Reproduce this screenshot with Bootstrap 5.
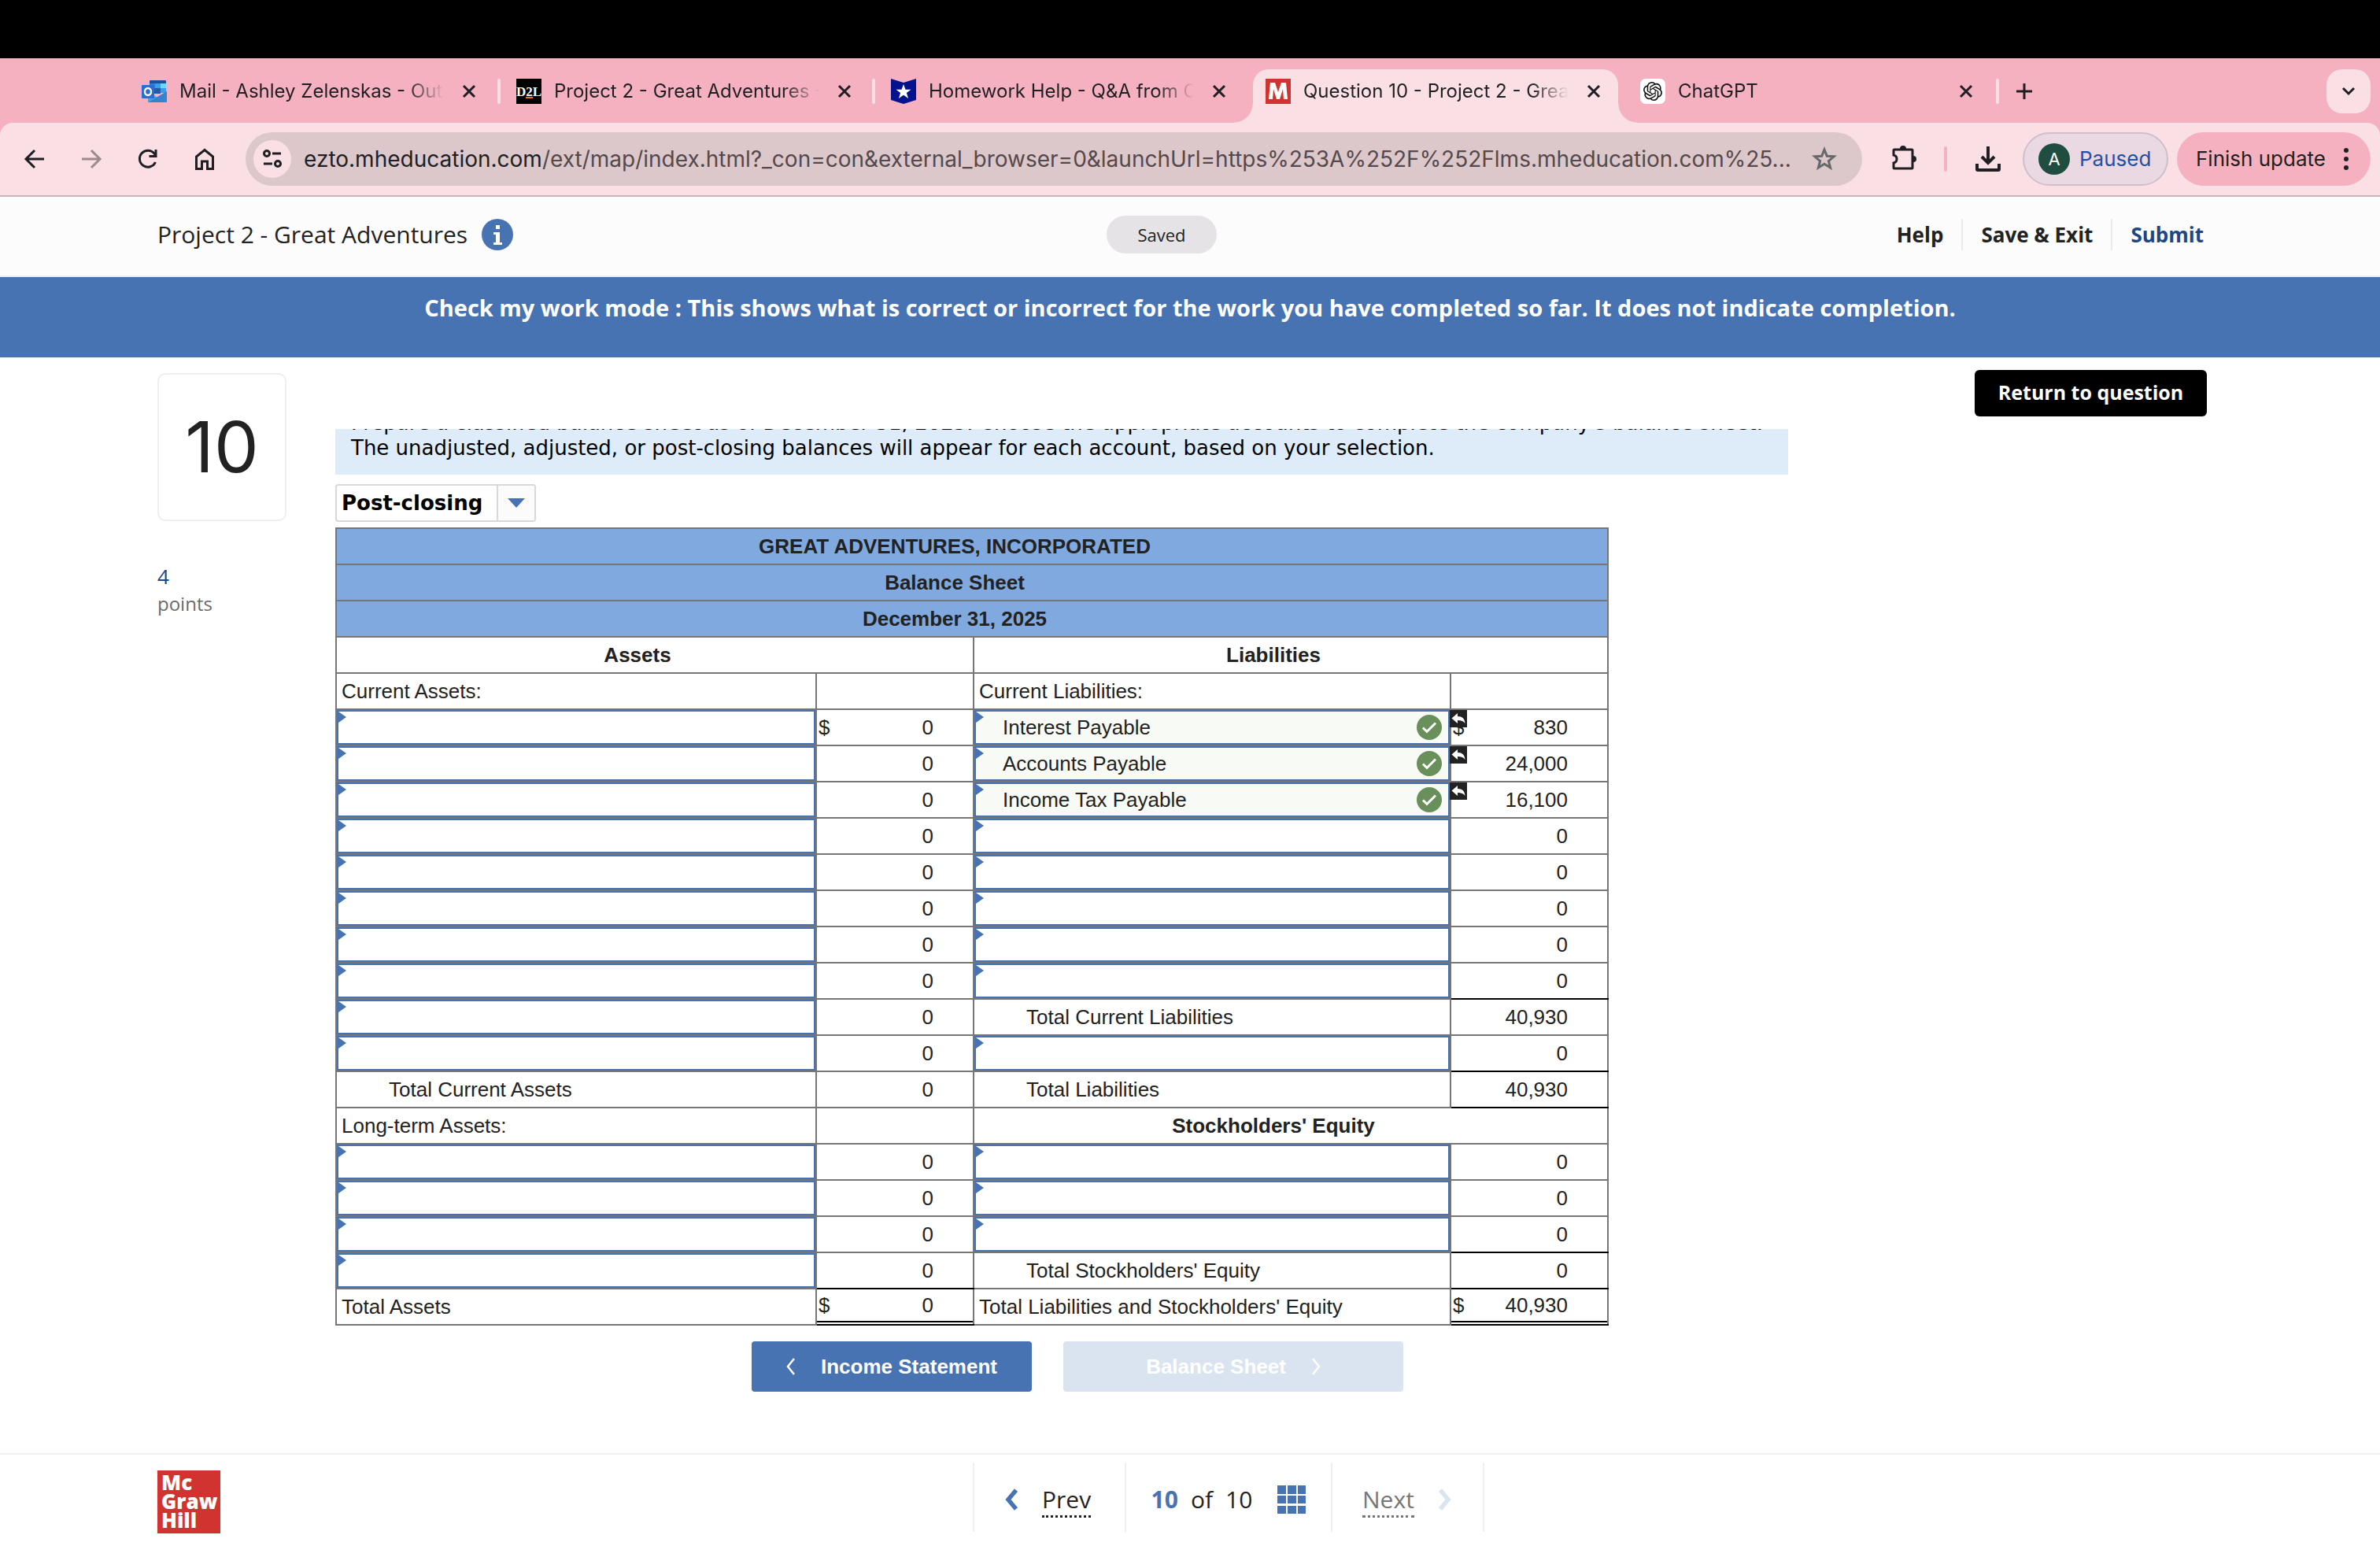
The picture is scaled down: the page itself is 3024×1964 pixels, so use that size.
<!DOCTYPE html>
<html lang="en">
<head>
<meta charset="utf-8">
<meta name="viewport" content="width=device-width, initial-scale=1">
<title>Question 10 - Project 2 - Great Adventures</title>
<link href="https://cdn.jsdelivr.net/npm/bootstrap@5.3.0/dist/css/bootstrap.min.css" rel="stylesheet">
<style>
:root{--blue:#4873b3;--ink:#222;--line:#767676;--strip:#f5b1bf;--bar:#fae0e4}
body{font-family:"Open Sans",sans-serif;font-size:26px;line-height:32px;color:var(--ink);background:#fff}
button,select{font:inherit;color:inherit}
button{background:none;border:0;padding:0}
svg{display:block;flex:none}
a{color:inherit;text-decoration:none}
.browser{font-family:Inter,sans-serif;color:#1f1f23}
.notch{height:74px;background:#000}
.strip{height:82px;padding:14px 12px 0 164px;background:var(--strip)}
.btab{width:464px;height:68px;padding:0 16px 12px 16px;gap:16px;font-size:24px;position:relative}
.btab-title{overflow:hidden;white-space:nowrap;-webkit-mask-image:linear-gradient(90deg,#000 86%,transparent);mask-image:linear-gradient(90deg,#000 86%,transparent)}
.btab-x{width:36px;height:36px}
.btab.on{background:var(--bar);border-radius:20px 20px 0 0}
.btab.on::before,.btab.on::after{content:"";position:absolute;bottom:0;width:24px;height:24px}
.btab.on::before{right:100%;background:radial-gradient(circle at 0 0,transparent 23px,var(--bar) 24px)}
.btab.on::after{left:100%;background:radial-gradient(circle at 100% 0,transparent 23px,var(--bar) 24px)}
.gap-sep{width:12px;height:32px;margin-top:12px}
.gap-sep i{width:4px;height:32px;border-radius:2px;background:var(--bar)}
.plus{width:48px;height:56px;margin-left:4px}
.tabsearch{width:56px;height:56px;border-radius:20px;background:var(--bar)}
.toolwrap{background:var(--strip)}
.tools{height:94px;padding:0 12px 0 28px;background:var(--bar);border-bottom:2px solid #c9b4ba;border-radius:16px 16px 0 0}
.navicons{gap:40px;margin-right:36px}
.address{height:68px;border-radius:34px;background:#dcc7ca;padding:0 32px 0 10px;font-size:28px;color:#56494c}
.address b{font-weight:400;color:#1f1f23}
.tune{width:48px;height:48px;border-radius:50%;background:var(--bar)}
.puzzle{margin-left:36px}
.tsep{width:4px;height:32px;border-radius:2px;background:var(--strip);margin:0 36px 0 34px}
.paused{height:68px;width:185px;border-radius:34px;border:2px solid #cfbfcb;background:#ead8e2;color:#2450a4;margin:0 11px 0 28px;padding-left:18px;gap:12px}
.avatar{width:40px;height:40px;border-radius:50%;background:#1f4d40;color:#fff;font-size:22px}
.finish{height:68px;width:246px;border-radius:34px;background:var(--strip);padding:0 28px 0 24px}
.apphead{display:grid;grid-template-columns:1fr auto 1fr;height:102px;padding:0 224px 4px 200px;background:#fcfcfc;border-bottom:2px solid #eee}
.apptitle{font-size:30px;gap:18px}
.saved{height:48px;width:140px;border-radius:24px;background:#e5e3e6;font-size:22px}
.headlinks{font-weight:700}
.headlinks a+a{border-left:2px solid #e9e9e9;margin-left:23px;padding-left:23px}
.headlinks a{line-height:40px}
.banner{height:102px;padding-top:19px;background:var(--blue);color:#fff;font-size:29px;line-height:40px;font-weight:700}
main{padding:0 220px 0 200px}
.qside{width:164px;margin-right:62px;padding-top:20px}
.qnum{height:188px;border:2px solid #eee;border-radius:10px;font:400 90px/1 Inter,sans-serif}
.pts{color:#1f4684;font-size:26px;margin-top:54px}
.ptl{color:#6b6b6b;font-size:24px;line-height:38px}
.work{width:1886px;padding-top:91px}
.info{margin-right:40px;padding:0 20px 18px;background:#deebf8;overflow:hidden;color:#000;font:26px/32px "DejaVu Sans",sans-serif}
.info p{margin:-24px 0 0;white-space:nowrap}
.balance{position:relative;width:255px;margin:12px 0 7px}
.balance select{appearance:none;width:100%;height:48px;border:2px solid #d8d8d8;border-radius:4px;background:#fff;padding:0 6px;font:700 26px/32px "DejaVu Sans",sans-serif;color:#000;display:block}
.balance span{position:absolute;right:2px;top:2px;bottom:2px;width:48px;border-left:2px solid #d8d8d8;background:#fbfbfb;pointer-events:none}
.sheet{width:1618px;table-layout:fixed;border-collapse:collapse;font:26px/32px "Liberation Sans",sans-serif;color:var(--ink)}
.sheet tr{height:46px}
.sheet th,.sheet td{border:2px solid var(--line);padding:0 6px;height:46px;white-space:nowrap;vertical-align:middle}
.sheet th{text-align:center;padding-right:50px}
.sheet thead th{background:#80aadf}
.sheet .ind{padding-left:66px}
.sheet .amt{text-align:right;padding:0 50px 0 2px}
.sheet .amt i{float:left;font-style:normal}
.sheet .under{border-bottom-color:#000}
.sheet .dbl{border-bottom-color:#000;box-shadow:inset 0 -2px #fff,inset 0 -4px #000;padding-bottom:4px}
.sheet .pick{padding:0;position:relative}
.pick select{appearance:none;display:block;width:100%;height:44px;border:2px solid var(--blue);border-radius:0;background:#fff;padding:0 60px 0 34px;color:var(--ink)}
.pick.ok select{background:#f8faf5}
.pick::before{content:"";position:absolute;left:2px;top:2px;border:solid transparent;border-width:7px 0 7px 10px;border-left-color:var(--blue)}
.tick{position:absolute;right:10px;top:6px}
.ret{position:absolute;left:100%;top:0;z-index:1}
.sheetnav{gap:40px;margin-top:20px}
.sheetnav button{height:64px;border-radius:4px;background:var(--blue);color:#fff;font:700 26px/32px "Liberation Sans",sans-serif;gap:32px}
.sheetnav .prevb{width:356px}
.sheetnav .nextb{width:432px;background:#dae4f0}
.return{margin-top:16px;height:59px;width:295px;border-radius:6px;background:#000;color:#fff;font-weight:700;font-size:25px;padding-bottom:4px}
footer{height:118px;border-top:2px solid #f0f0f0;padding-left:200px}
.mh{width:80px;height:80px;margin-top:20px;padding:3px 5px;background:#d13430;color:#fff;font:800 26px/24px "Open Sans",sans-serif}
.pager{margin-left:956px;height:88px;margin-top:10px;border-left:2px solid #f0f0f0;font-size:30px}
.pager>div{border-right:2px solid #f0f0f0;height:88px;padding-top:6px}
.pstep{width:193px;padding-left:38px;gap:30px}
.pcount{width:262px;gap:16px}
.pager u{text-decoration:none;line-height:32px;border-bottom:3px dotted currentColor}
</style>
<script src="https://cdn.jsdelivr.net/npm/bootstrap@5.3.0/dist/js/bootstrap.bundle.min.js"></script>
</head>
<body class="d-flex flex-column min-vh-100">
<svg width="0" height="0" class="position-absolute" aria-hidden="true">
  <symbol id="x" viewBox="0 0 18 18"><path d="M2 2l14 14M16 2L2 16" stroke="#1f1f23" stroke-width="3" fill="none"/></symbol>
  <symbol id="check" viewBox="0 0 32 32"><circle cx="16" cy="16" r="16" fill="#698f5b"/><path d="M8 16.500l5 5L24 10.500" stroke="#fff" stroke-width="3" fill="none"/></symbol>
  <symbol id="reply" viewBox="0 0 22 22"><path d="M0 0h22v22H0z" fill="#222"/><path d="M2.500 10.500L10 4v4c6 0 9 3 9.500 9-2-3-5-4-9.500-4v4z" fill="#fff"/></symbol>
</svg>

<header class="browser">
  <div class="notch"></div>
  <div class="strip d-flex">
    <div class="btab d-flex align-items-center">
      <svg width="32" height="32" viewBox="0 0 32 32"><path d="M10 3q0-1 1-1h19q1 0 1 1v14H10z" fill="#1d4f9c"/><path d="M10 6h7v6h-7z" fill="#2f7fd6"/><path d="M17 6h7v6h-7z" fill="#35a1e8"/><path d="M24 6h7v6h-7z" fill="#6fd6f8"/><path d="M10 12h14v7H10z" fill="#1e5cb0"/><path d="M24 12h7v6h-7z" fill="#3b9be6"/><path d="M32 16v13q0 1-1 1H9q-1 0-1-1V16l12 8z" fill="#4aa3e6"/><path d="M8 30L32 16v13q0 1-1 1z" fill="#3482d0"/><rect y="8" width="16" height="17" rx="1" fill="#2a6fd0"/><ellipse cx="8" cy="16.500" rx="4" ry="4.500" fill="none" stroke="#fff" stroke-width="2.400"/></svg>
      <span class="btab-title flex-grow-1">Mail - Ashley Zelenskas - Outlook</span>
      <button class="btab-x d-grid" aria-label="Close tab"><svg class="m-auto" width="18" height="18"><use href="#x"/></svg></button>
    </div>
    <div class="gap-sep d-flex justify-content-center"><i></i></div>
    <div class="btab d-flex align-items-center">
      <svg width="32" height="32" viewBox="0 0 32 32"><path d="M0 0h32v32H0z"/><text x="16" y="22" text-anchor="middle" font-family="Liberation Serif,serif" font-weight="700" font-size="17" fill="#fff">D2L</text><path d="M12 23h9v2h-9z" fill="#e87722"/></svg>
      <span class="btab-title flex-grow-1">Project 2 - Great Adventures - ACC</span>
      <button class="btab-x d-grid" aria-label="Close tab"><svg class="m-auto" width="18" height="18"><use href="#x"/></svg></button>
    </div>
    <div class="gap-sep d-flex justify-content-center"><i></i></div>
    <div class="btab d-flex align-items-center">
      <svg width="32" height="32" viewBox="0 0 32 32"><path d="M0 0l16 5 16-5v27l-16 5-16-5z" fill="#04128e"/><path d="M16 7l2.500 6.800h7l-5.600 4.200 2.200 7L16 20.800 9.900 25l2.200-7-5.600-4.200h7z" fill="#fff"/></svg>
      <span class="btab-title flex-grow-1">Homework Help - Q&amp;A from Online</span>
      <button class="btab-x d-grid" aria-label="Close tab"><svg class="m-auto" width="18" height="18"><use href="#x"/></svg></button>
    </div>
    <div class="gap-sep"></div>
    <div class="btab on d-flex align-items-center">
      <svg width="32" height="32" viewBox="0 0 32 32"><path d="M0 0h32v32H0z" fill="#d13430"/><path d="M4 26L6 5h6l4 12 4-12h6l2 21h-5L22 13l-4 13h-4l-4-13-1 13z" fill="#fff"/></svg>
      <span class="btab-title flex-grow-1">Question 10 - Project 2 - Great Adv</span>
      <button class="btab-x d-grid" aria-label="Close tab"><svg class="m-auto" width="18" height="18"><use href="#x"/></svg></button>
    </div>
    <div class="gap-sep"></div>
    <div class="btab d-flex align-items-center">
      <svg width="32" height="32" viewBox="-4 -4 32 32"><rect x="-4" y="-4" width="32" height="32" rx="7" fill="#fff"/><path d="M22.282 9.821a5.985 5.985 0 0 0-.516-4.910 6.046 6.046 0 0 0-6.510-2.900A6.065 6.065 0 0 0 4.981 4.182a5.985 5.985 0 0 0-3.998 2.900 6.046 6.046 0 0 0 .743 7.097 5.980 5.980 0 0 0 .511 4.911 6.051 6.051 0 0 0 6.515 2.900A5.985 5.985 0 0 0 13.260 24a6.056 6.056 0 0 0 5.772-4.206 5.989 5.989 0 0 0 3.998-2.900 6.056 6.056 0 0 0-.748-7.073zm-9.022 12.608a4.476 4.476 0 0 1-2.876-1.041l.142-.080 4.778-2.758a.795.795 0 0 0 .393-.681v-6.737l2.020 1.169a.071.071 0 0 1 .038.052v5.583a4.504 4.504 0 0 1-4.495 4.494zm-9.661-4.125a4.471 4.471 0 0 1-.535-3.014l.142.085 4.783 2.758a.771.771 0 0 0 .781 0l5.843-3.369v2.332a.080.080 0 0 1-.033.062L9.740 19.950a4.499 4.499 0 0 1-6.141-1.646zM2.341 7.896a4.485 4.485 0 0 1 2.366-1.973V11.600a.766.766 0 0 0 .388.677l5.814 3.354-2.020 1.169a.076.076 0 0 1-.071 0l-4.830-2.787A4.504 4.504 0 0 1 2.341 7.872zm16.596 3.856L13.104 8.364 15.119 7.200a.076.076 0 0 1 .071 0l4.830 2.791a4.494 4.494 0 0 1-.677 8.104v-5.677a.790.790 0 0 0-.407-.667zm2.011-3.023l-.142-.085-4.774-2.782a.776.776 0 0 0-.785 0L9.409 9.230V6.897a.066.066 0 0 1 .028-.062l4.830-2.787a4.499 4.499 0 0 1 6.680 4.660zM8.307 12.863l-2.020-1.164a.080.080 0 0 1-.038-.057V6.074a4.499 4.499 0 0 1 7.376-3.454l-.142.081L8.704 5.459a.795.795 0 0 0-.393.681zm1.098-2.365l2.602-1.500 2.607 1.500v2.999l-2.597 1.500-2.607-1.500Z" fill="#111"/></svg>
      <span class="btab-title flex-grow-1">ChatGPT</span>
      <button class="btab-x d-grid" aria-label="Close tab"><svg class="m-auto" width="18" height="18"><use href="#x"/></svg></button>
    </div>
    <div class="gap-sep d-flex justify-content-center"><i></i></div>
    <button class="plus d-grid" aria-label="New tab"><svg class="m-auto" width="22" height="22" viewBox="0 0 22 22"><path d="M11 1v20M1 11h20" stroke="#1f1f23" stroke-width="3"/></svg></button>
    <button class="tabsearch d-grid ms-auto" aria-label="Search tabs"><svg class="m-auto" width="18" height="12" viewBox="0 0 18 12"><path d="M2 2l7 7 7-7" stroke="#1f1f23" stroke-width="3" fill="none"/></svg></button>
  </div>
  <div class="toolwrap">
  <div class="tools d-flex align-items-center">
    <div class="navicons d-flex">
      <button aria-label="Back"><svg width="32" height="32" viewBox="0 0 32 32"><path d="M28 16H6M16 5L5 16l11 11" stroke="#1f1f23" stroke-width="3" fill="none"/></svg></button>
      <button aria-label="Forward"><svg width="32" height="32" viewBox="0 0 32 32"><path d="M4 16h22M16 5l11 11-11 11" stroke="#9d8a8e" stroke-width="3" fill="none"/></svg></button>
      <button aria-label="Reload"><svg width="32" height="32" viewBox="0 0 32 32"><path d="M25.500 20A10.500 10.500 0 1 1 24 9l2 3" stroke="#1f1f23" stroke-width="3" fill="none"/><path d="M27.500 4v10h-10v-3h7V4z" fill="#1f1f23"/></svg></button>
      <button aria-label="Home"><svg width="32" height="32" viewBox="0 0 32 32"><path d="M5.500 28.500V13L16 4.500 26.500 13v15.500h-7V19h-7v9.500z" stroke="#1f1f23" stroke-width="3" fill="none"/></svg></button>
    </div>
    <div class="address d-flex align-items-center flex-grow-1">
      <button class="tune d-grid me-3" aria-label="Site information"><svg class="m-auto" width="26" height="26" viewBox="0 0 26 26"><g stroke="#1f1f23" stroke-width="3" fill="none"><circle cx="6" cy="6" r="3.500"/><path d="M13 6h11M2 19h11"/><circle cx="20" cy="19" r="3.500"/></g></svg></button>
      <span class="flex-grow-1 text-nowrap"><b>ezto.mheducation.com</b>/ext/map/index.html?_con=con&amp;external_browser=0&amp;launchUrl=https%253A%252F%252Flms.mheducation.com%25...</span>
      <button aria-label="Bookmark"><svg width="32" height="32" viewBox="0 0 32 32"><path d="M16 4l3.300 8.200 8.900.600-6.800 5.700 2.200 8.500L16 22.300 8.400 27l2.200-8.500-6.800-5.700 8.900-.600z" stroke="#66696c" stroke-width="3" fill="none"/></svg></button>
    </div>
    <button class="puzzle" aria-label="Extensions"><svg width="34" height="36" viewBox="0 0 34 36"><path d="M4 7q0-1 1-1h22q1 0 1 1v22q0 1-1 1H5q-1 0-1-1v-6q4-1 4-5t-4-5z" stroke="#1f1f23" stroke-width="3" fill="none"/><path d="M12 5a4 4 0 0 1 8 0zM29 14a4 4 0 0 1 0 8z" fill="#1f1f23"/></svg></button>
    <span class="tsep"></span>
    <button aria-label="Downloads"><svg width="32" height="32" viewBox="0 0 32 32"><path d="M16 0v21M8 13l8 8 8-8M2 22v7q0 1 1 1h26q1 0 1-1v-7" stroke="#1f1f23" stroke-width="4" fill="none"/></svg></button>
    <button class="paused d-flex align-items-center"><span class="avatar d-flex align-items-center justify-content-center">A</span>Paused</button>
    <button class="finish d-flex align-items-center justify-content-between">Finish update<svg width="6" height="28" viewBox="0 0 6 28"><g fill="#1f1f23"><circle cx="3" cy="3" r="3"/><circle cx="3" cy="14" r="3"/><circle cx="3" cy="25" r="3"/></g></svg></button>
  </div>
  </div>
</header>

<div class="apphead align-items-center">
  <div class="apptitle d-flex align-items-center">Project 2 - Great Adventures
    <svg width="40" height="40" viewBox="0 0 40 40"><circle cx="20" cy="20" r="20" fill="#4873b3"/><path d="M18 8h5v5h-5zM15 17h8v13h3v3H15v-3h3V20h-3z" fill="#fff"/></svg>
  </div>
  <div class="saved d-flex align-items-center justify-content-center me-5">Saved</div>
  <nav class="headlinks d-flex justify-content-end"><a href="#">Help</a><a href="#">Save &amp; Exit</a><a href="#" style="color:#1f4684">Submit</a></nav>
</div>
<div class="banner text-center">Check my work mode : This shows what is correct or incorrect for the work you have completed so far. It does not indicate completion.</div>

<main class="d-flex align-items-start flex-grow-1">
  <aside class="qside">
    <div class="qnum d-flex align-items-center justify-content-center">10</div>
    <div class="pts">4</div>
    <div class="ptl">points</div>
  </aside>
  <section class="work">
    <div class="info"><p>Prepare a classified balance sheet as of December 31, 2025. Choose the appropriate accounts to complete the company's balance sheet.<br>The unadjusted, adjusted, or post-closing balances will appear for each account, based on your selection.</p></div>
    <div class="balance">
      <select aria-label="Balance type"><option>Post-closing</option><option>Adjusted</option><option>Unadjusted</option></select>
      <span class="d-grid"><svg class="m-auto" width="22" height="12" viewBox="0 0 22 12"><path d="M0 0h22L11 12z" fill="#4873b3"/></svg></span>
    </div>
    <table class="sheet">
      <colgroup><col style="width:610px"><col style="width:200px"><col style="width:606px"><col style="width:200px"></colgroup>
      <thead>
        <tr><th colspan="4">GREAT ADVENTURES, INCORPORATED</th></tr>
        <tr><th colspan="4">Balance Sheet</th></tr>
        <tr><th colspan="4">December 31, 2025</th></tr>
      </thead>
      <tbody id="rows"></tbody>
    </table>
    <div class="sheetnav d-flex justify-content-center">
      <button class="prevb d-flex align-items-center justify-content-center"><svg width="12" height="22" viewBox="0 0 12 22"><path d="M10 1L2 11l8 10" stroke="#fff" stroke-width="2.500" fill="none"/></svg>Income Statement</button>
      <button class="nextb d-flex align-items-center justify-content-center" disabled>Balance Sheet<svg width="12" height="22" viewBox="0 0 12 22"><path d="M2 1l8 10-8 10" stroke="#fff" stroke-width="2.500" fill="none"/></svg></button>
    </div>
  </section>
  <button class="return ms-auto">Return to question</button>
</main>

<footer class="d-flex">
  <div class="mh">Mc<br>Graw<br>Hill</div>
  <nav class="pager d-flex">
    <div class="pstep d-flex align-items-center"><svg width="18" height="28" viewBox="0 0 18 28"><path d="M15 2L5 14l10 12" stroke="#4873b3" stroke-width="5.500" fill="none"/></svg><a href="#"><u>Prev</u></a></div>
    <div class="pcount d-flex align-items-center justify-content-center"><b style="color:#4873b3">10</b><span>of</span><span>10</span><button class="ms-3" aria-label="All questions"><svg width="36" height="36" viewBox="0 0 36 36"><path d="M0 0h11v11H0zM13 0h11v11H13zM26 0h10v11H26zM0 13h11v10H0zM13 13h11v10H13zM26 13h10v10H26zM0 26h11v10H0zM13 26h11v10H13zM26 26h10v10H26z" fill="#4873b3"/></svg></button></div>
    <div class="pstep d-flex align-items-center" style="color:#767676"><a href="#"><u>Next</u></a><svg width="18" height="28" viewBox="0 0 18 28"><path d="M3 2l10 12L3 26" stroke="#dae4f0" stroke-width="5.500" fill="none"/></svg></div>
  </nav>
</footer>

<script>
/* Each side is [label, amount, flags]. Flags: p picker, i indented, d dollar sign, u rule below, t double rule, h heading */
const left = [
  ['Assets','','h'],['Current Assets:',''],['','0','pd'],['','0','p'],['','0','p'],['','0','p'],['','0','p'],['','0','p'],['','0','p'],['','0','p'],['','0','p'],['','0','p'],
  ['Total Current Assets','0','i'],['Long-term Assets:',''],['','0','p'],['','0','p'],['','0','p'],['','0','pu'],['Total Assets','0','dt']];
const right = [
  ['Liabilities','','h'],['Current Liabilities:',''],['Interest Payable','830','pd'],['Accounts Payable','24,000','p'],['Income Tax Payable','16,100','p'],['','0','p'],['','0','p'],['','0','p'],['','0','p'],['','0','pu'],
  ['Total Current Liabilities','40,930','i'],['','0','pu'],['Total Liabilities','40,930','iu'],["Stockholders' Equity",'','h'],['','0','p'],['','0','p'],['','0','pu'],["Total Stockholders' Equity",'0','iu'],["Total Liabilities and Stockholders' Equity",'40,930','dt']];
function side([label, amount, f = '']) {
  const has = c => f.includes(c);
  if (has('h')) return `<th colspan="2">${label}</th>`;
  const first = has('p')
    ? `<td class="pick${label ? ' ok' : ''}"><select aria-label="Account"><option>${label}</option></select>${label ? '<svg class="tick" width="32" height="32"><use href="#check"/></svg><svg class="ret" width="22" height="22"><use href="#reply"/></svg>' : ''}</td>`
    : `<td${has('i') ? ' class="ind"' : ''}>${label}</td>`;
  return first + `<td class="amt${has('u') ? ' under' : ''}${has('t') ? ' dbl' : ''}">${has('d') ? '<i>$</i>' : ''}${amount}</td>`;
}
document.getElementById('rows').innerHTML = left.map((l, n) => `<tr>${side(l)}${side(right[n])}</tr>`).join('');
</script>
</body>
</html>
